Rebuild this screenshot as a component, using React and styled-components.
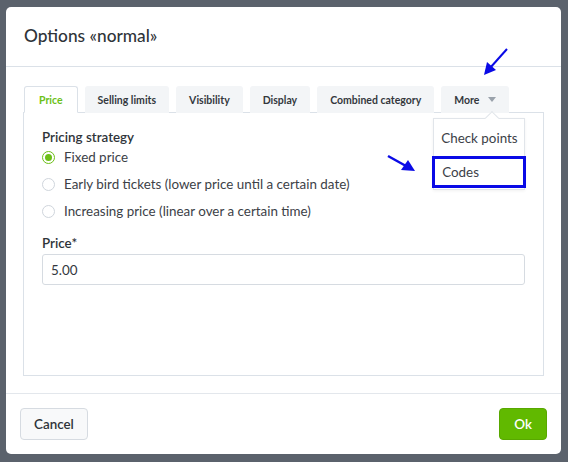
import React from "react";
import styled, { createGlobalStyle } from "styled-components";

const Global = createGlobalStyle`
  html, body { margin: 0; padding: 0; }
  body {
    background: #5b626c;
    font-family: Lato, "Noto Sans", sans-serif;
    color: #333;
  }
`;

const Page = styled.div`
  width: 568px;
  height: 462px;
  padding: 7px 7px 8px 6px;
  box-sizing: border-box;
  position: relative;
`;

const Modal = styled.div`
  width: 555px;
  height: 447px;
  background: #fff;
  border-radius: 5px;
  display: flex;
  flex-direction: column;
  position: relative;
`;

const Header = styled.div`
  height: 59px;
  border-bottom: 1px solid #dbe1e8;
  display: flex;
  align-items: center;
  padding: 0 18px;
`;

const Title = styled.h1`
  margin: 0 0 2px 0;
  font-size: 17.3px;
  font-weight: 500;
  color: #2f3439;
`;

const Body = styled.div`
  padding: 19px 17px 0 17px;
  flex: 1;
`;

const Tabs = styled.div`
  display: flex;
  gap: 7px;
  padding-left: 1px;
  position: relative;
  z-index: 1;
`;

const Tab = styled.div`
  flex-shrink: 0;
  white-space: nowrap;
  height: 27px;
  box-sizing: border-box;
  padding: 0 ${(p) => (p.$active ? "14px" : "12px")};
  display: flex;
  align-items: center;
  gap: 9px;
  font-size: 10.5px;
  font-weight: 700;
  border-radius: 3px 3px 0 0;
  position: relative;
  color: ${(p) => (p.$active ? "#6cbf17" : "#33383d")};
  background: ${(p) => (p.$active ? "#fff" : "#f3f5f7")};
  border: 1px solid ${(p) => (p.$active ? "#dbe1e8" : "transparent")};
  border-bottom-color: ${(p) => (p.$active ? "#fff" : "transparent")};
  margin-bottom: -1px;
`;

const Caret = styled.span`
  width: 0;
  height: 0;
  border-left: 4px solid transparent;
  border-right: 4px solid transparent;
  border-top: 5px solid #9aa2ab;
`;

const Panel = styled.div`
  border: 1px solid #dbe1e8;
  height: 264px;
  box-sizing: border-box;
  padding: 15px 18px 0 18px;
`;

const Label = styled.div`
  font-size: 13.4px;
  font-weight: 600;
  color: #2f3439;
  line-height: 18px;
`;

const RadioList = styled.div`
  display: flex;
  flex-direction: column;
  gap: 8px;
  margin-top: 2px;
`;

const RadioRow = styled.label`
  display: flex;
  align-items: center;
  gap: 9px;
  font-size: 13.4px;
  line-height: 19px;
  color: #3c4147;
`;

const RadioCircle = styled.span`
  width: 13px;
  height: 13px;
  box-sizing: border-box;
  border-radius: 50%;
  border: 1px solid ${(p) => (p.$checked ? "#6cbf17" : "#cfd5dc")};
  background: #fff;
  display: flex;
  align-items: center;
  justify-content: center;
  &::after {
    content: "";
    width: 7px;
    height: 7px;
    border-radius: 50%;
    background: ${(p) => (p.$checked ? "#6cbf17" : "transparent")};
  }
`;

const Field = styled.div`
  margin-top: 13px;
  display: flex;
  flex-direction: column;
  gap: 2px;
`;

const Input = styled.div`
  height: 31px;
  box-sizing: border-box;
  border: 1px solid #d6dbe1;
  border-radius: 3px;
  padding: 0 8px;
  display: flex;
  align-items: center;
  font-size: 13.4px;
  color: #33383d;
`;

const Footer = styled.div`
  margin-top: 17px;
  border-top: 1px solid #e3e7ec;
  padding: 14px 14px;
  display: flex;
  justify-content: space-between;
`;

const Button = styled.button`
  height: 32px;
  box-sizing: border-box;
  border-radius: 4px;
  font-family: inherit;
  font-size: 13.4px;
  font-weight: 600;
  padding: 0 ${(p) => (p.$primary ? "14px" : "13px")};
  background: ${(p) => (p.$primary ? "#61b900" : "#f8f9fa")};
  color: ${(p) => (p.$primary ? "#fff" : "#2f3439")};
  border: 1px solid ${(p) => (p.$primary ? "#58a800" : "#d6dbe1")};
`;

const Dropdown = styled.div`
  position: absolute;
  top: 31px;
  left: -9px;
  width: 90px;
  background: #fff;
  border: 1px solid #e1e5ea;
  box-shadow: 0 1px 3px rgba(0, 0, 0, 0.06);
  font-weight: 400;
  &::before {
    content: "";
    position: absolute;
    top: -6px;
    left: 53px;
    width: 9px;
    height: 9px;
    background: #fff;
    border-left: 1px solid #e1e5ea;
    border-top: 1px solid #e1e5ea;
    transform: rotate(45deg);
  }
`;

const MenuItem = styled.div`
  white-space: nowrap;
  font-size: 13.4px;
  color: #3c4147;
  height: 37px;
  display: flex;
  align-items: center;
  padding: 0 7px;
  box-sizing: border-box;
  position: relative;
  ${(p) =>
    p.$highlight &&
    `
    border: 3px solid #0a0ae6;
    margin: 0 -2px 1px -2px;
    padding: 0 7px;
    height: 32px;
  `}
`;

const Arrow = styled.svg`
  position: absolute;
  overflow: visible;
`;

export default function App() {
  return (
    <Page>
      <Global />
      <Modal>
        <Header>
          <Title>Options «normal»</Title>
        </Header>
        <Body>
          <Tabs>
            <Tab $active>Price</Tab>
            <Tab>Selling limits</Tab>
            <Tab>Visibility</Tab>
            <Tab>Display</Tab>
            <Tab>Combined category</Tab>
            <Tab>
              More
              <Caret />
              <Dropdown>
                <MenuItem>Check points</MenuItem>
                <MenuItem $highlight>Codes</MenuItem>
              </Dropdown>
            </Tab>
          </Tabs>
          <Panel>
            <Label>Pricing strategy</Label>
            <RadioList>
              <RadioRow>
                <RadioCircle $checked />
                Fixed price
              </RadioRow>
              <RadioRow>
                <RadioCircle />
                Early bird tickets (lower price until a certain date)
              </RadioRow>
              <RadioRow>
                <RadioCircle />
                Increasing price (linear over a certain time)
              </RadioRow>
            </RadioList>
            <Field>
              <Label>Price*</Label>
              <Input>5.00</Input>
            </Field>
          </Panel>
        </Body>
        <Footer>
          <Button>Cancel</Button>
          <Button $primary>Ok</Button>
        </Footer>
      </Modal>
      <Arrow style={{ left: 484, top: 48 }} width="24" height="28" viewBox="0 0 24 28">
        <line x1="23" y1="1" x2="6" y2="20" stroke="#0a0ae6" strokeWidth="2" />
        <polygon points="0,27 3,14 12,22" fill="#0a0ae6" />
      </Arrow>
      <Arrow style={{ left: 388, top: 155 }} width="28" height="18" viewBox="0 0 28 18">
        <line x1="0" y1="1" x2="18" y2="11" stroke="#0a0ae6" strokeWidth="2.5" />
        <polygon points="27,16 13,15 20,5" fill="#0a0ae6" />
      </Arrow>
    </Page>
  );
}
